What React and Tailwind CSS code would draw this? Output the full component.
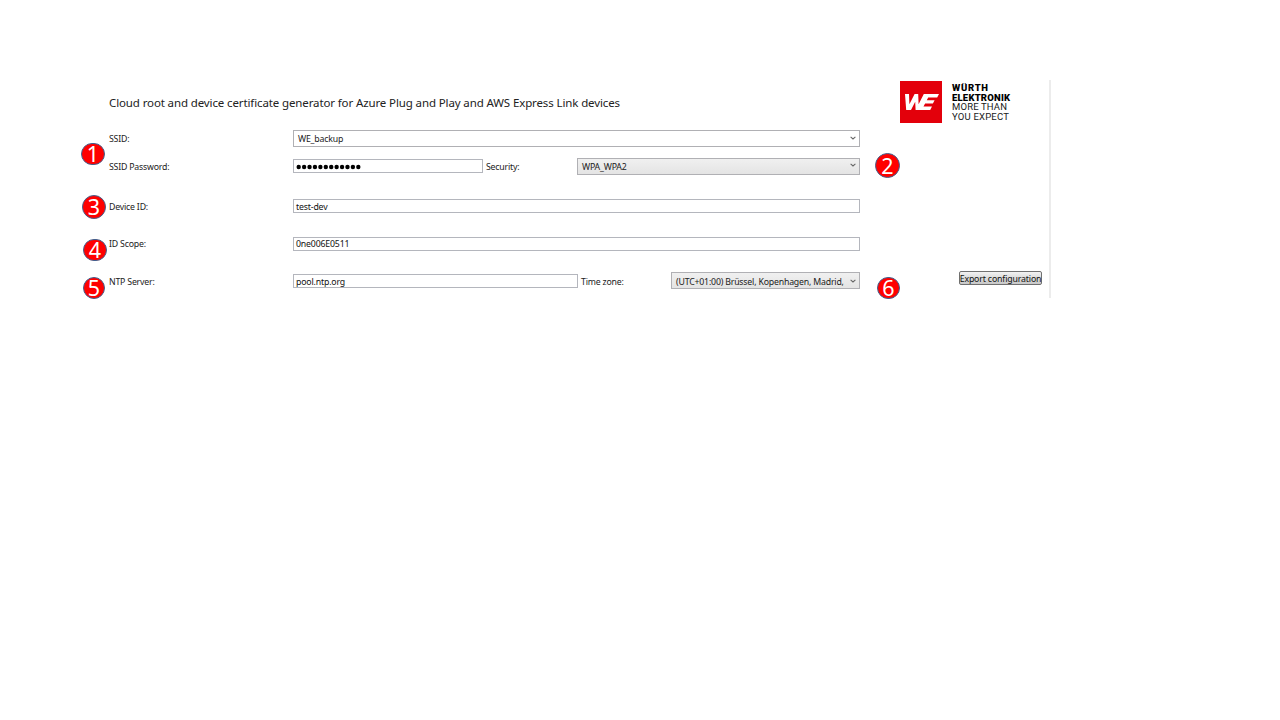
import React from "react";

function Label({ children, className = "" }) {
  return (
    <span className={"shrink-0 whitespace-nowrap pt-[3px] text-[8.75px] tracking-[-0.2px] text-[#222] " + className}>
      {children}
    </span>
  );
}

function Field({ children, className = "pt-[2px]" }) {
  return (
    <div className={"flex h-[14px] shrink-0 items-center whitespace-nowrap border border-[#b4b6bd] bg-white pl-[2px] text-[8.75px] leading-[12px] tracking-[-0.17px] text-[#111] " + className}>
      {children}
    </div>
  );
}

function Select({ children, className = "" }) {
  return (
    <div className={"flex h-[17px] shrink-0 items-center justify-between whitespace-nowrap border border-[#b0b0b4] pl-[4px] pr-[3px] text-[8.75px] leading-[12px] tracking-[-0.19px] text-[#222] " + className}>
      {children}
      <svg width="6" height="6" viewBox="0 0 6 6" className="mb-[3px] shrink-0">
        <path d="M0.6 1.8 L3 3.9 L5.4 1.8" fill="none" stroke="#666" strokeWidth="1.1" />
      </svg>
    </div>
  );
}

function Badge({ n, className }) {
  return (
    <div className={"absolute flex items-center justify-center rounded-full border border-[#41618f] bg-[#ff0000] text-[21.5px] leading-none text-white " + className}>
      {n}
    </div>
  );
}

function Logo() {
  return (
    <div className="flex">
      <svg width="42" height="42" viewBox="0 0 42 42">
        <rect width="42" height="42" fill="#e3000b" />
        <path
          d="M5 13 H9 L9.4 23.2 L14.6 13 H18.2 L18.6 23.2 L23.8 13 H39 L37.2 16.4 H28.2 L26.8 19.2 H34.6 L32.9 22.4 H25.1 L23.5 25.6 H32 L30.2 29 H15.6 L15.2 20.8 L11 29 H6.2 Z"
          fill="#fff"
        />
      </svg>
      <div className="ml-[10px] mt-[2px] font-['Roboto',sans-serif] text-[9.5px] leading-[9.6px] text-[#1a1a1a]">
        <div className="font-black tracking-[0.7px] text-black">WÜRTH</div>
        <div className="font-black tracking-[0.2px] text-black">ELEKTRONIK</div>
        <div className="tracking-[0.15px]">MORE THAN</div>
        <div className="tracking-[0.2px]">YOU EXPECT</div>
      </div>
    </div>
  );
}

export default function App() {
  return (
    <div className="h-[720px] w-[1280px] overflow-hidden bg-white pl-[80px] pt-[80px] font-['Noto_Sans',sans-serif]">
      <div className="relative flex h-[218px] w-[971px] border-r-2 border-[#ececec] pl-[29px]">
        <div className="w-[752px] shrink-0">
          <h1 className="h-[50px] whitespace-nowrap pt-[14px] text-[11.5px] leading-[18px] tracking-[-0.12px] text-[#222]">
            Cloud root and device certificate generator for Azure Plug and Play and AWS Express Link devices
          </h1>
          <div className="flex h-[17px] items-center">
            <Label className="w-[184px]">SSID:</Label>
            <Select className="w-[567px] bg-white pt-px">WE_backup</Select>
          </div>
          <div className="mt-[10px] flex h-[18px] items-center">
            <Label className="w-[184px]">SSID Password:</Label>
            <Field className="mr-[3px] w-[190px]">
              <svg width="66" height="12" viewBox="0 0 66 12">
                {Array.from({ length: 12 }, (_, i) => (
                  <circle key={i} cx={2.7 + i * 5.42} cy="7" r="2.2" fill="#000" />
                ))}
              </svg>
            </Field>
            <Label className="w-[91px]">Security:</Label>
            <Select className="w-[283px] bg-linear-to-b from-[#f0f0f0] to-[#e4e4e4] pt-px">WPA_WPA2</Select>
          </div>
          <div className="mt-[22px] flex h-[18px] items-center">
            <Label className="w-[184px]">Device ID:</Label>
            <Field className="w-[567px] pt-[2px]">test-dev</Field>
          </div>
          <div className="mt-[20px] flex h-[17px] items-center">
            <Label className="w-[184px]">ID Scope:</Label>
            <Field className="w-[567px]">0ne006E0511</Field>
          </div>
          <div className="mt-[20px] flex h-[18px] items-center">
            <Label className="w-[184px]">NTP Server:</Label>
            <Field className="mr-[3px] w-[285px] pt-[2px]">pool.ntp.org</Field>
            <Label className="w-[90px]">Time zone:</Label>
            <Select className="mb-px w-[189px] bg-linear-to-b from-[#f0f0f0] to-[#e4e4e4] pt-[3px]">
              (UTC+01:00) Brüssel, Kopenhagen, Madrid,
            </Select>
          </div>
        </div>
        <div className="ml-[39px] flex flex-1 flex-col pt-px">
          <Logo />
          <button className="ml-[59px] mt-[148px] flex h-[14px] w-[83px] items-center justify-center whitespace-nowrap rounded-[2px] border border-[#707070] bg-linear-to-b from-[#f2f2f2] via-[#dcdcdc] to-[#c8c8c8] pt-px text-[8.75px] leading-[12px] tracking-[-0.15px] text-[#111]">
            Export configuration
          </button>
        </div>
        <Badge n="1" className="left-[1px] top-[63px] h-[22px] w-[24px]" />
        <Badge n="2" className="left-[795px] top-[73px] h-[25px] w-[25px]" />
        <Badge n="3" className="left-[2px] top-[115px] h-[24px] w-[24px]" />
        <Badge n="4" className="left-[3px] top-[159px] h-[22px] w-[24px]" />
        <Badge n="5" className="left-[3px] top-[197px] h-[22px] w-[22px]" />
        <Badge n="6" className="left-[797px] top-[197px] h-[22px] w-[23px]" />
      </div>
    </div>
  );
}
